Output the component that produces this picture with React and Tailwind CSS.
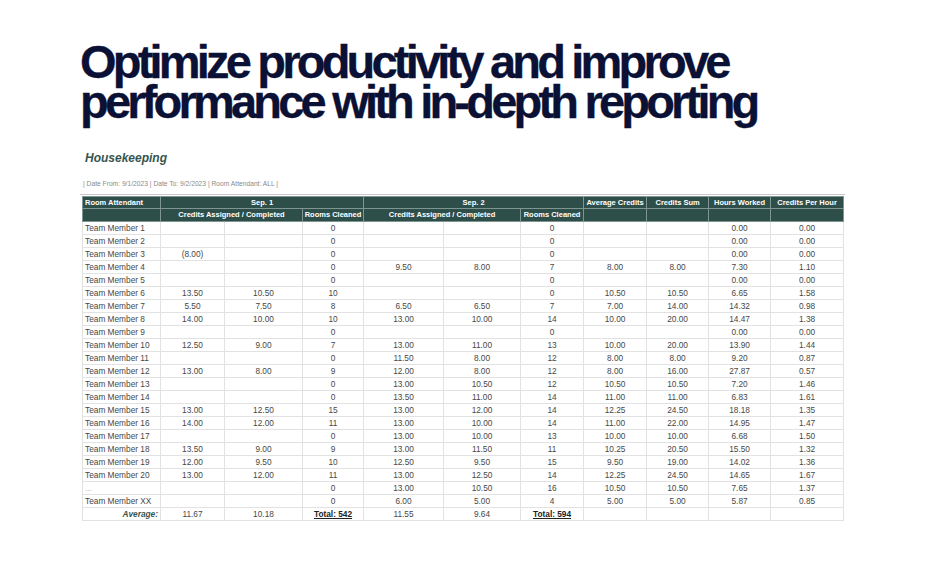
import React from "react";

const rows = [
  ["Team Member 1", "", "", "0", "", "", "0", "", "", "0.00", "0.00"],
  ["Team Member 2", "", "", "0", "", "", "0", "", "", "0.00", "0.00"],
  ["Team Member 3", "(8.00)", "", "0", "", "", "0", "", "", "0.00", "0.00"],
  ["Team Member 4", "", "", "0", "9.50", "8.00", "7", "8.00", "8.00", "7.30", "1.10"],
  ["Team Member 5", "", "", "0", "", "", "0", "", "", "0.00", "0.00"],
  ["Team Member 6", "13.50", "10.50", "10", "", "", "0", "10.50", "10.50", "6.65", "1.58"],
  ["Team Member 7", "5.50", "7.50", "8", "6.50", "6.50", "7", "7.00", "14.00", "14.32", "0.98"],
  ["Team Member 8", "14.00", "10.00", "10", "13.00", "10.00", "14", "10.00", "20.00", "14.47", "1.38"],
  ["Team Member 9", "", "", "0", "", "", "0", "", "", "0.00", "0.00"],
  ["Team Member 10", "12.50", "9.00", "7", "13.00", "11.00", "13", "10.00", "20.00", "13.90", "1.44"],
  ["Team Member 11", "", "", "0", "11.50", "8.00", "12", "8.00", "8.00", "9.20", "0.87"],
  ["Team Member 12", "13.00", "8.00", "9", "12.00", "8.00", "12", "8.00", "16.00", "27.87", "0.57"],
  ["Team Member 13", "", "", "0", "13.00", "10.50", "12", "10.50", "10.50", "7.20", "1.46"],
  ["Team Member 14", "", "", "0", "13.50", "11.00", "14", "11.00", "11.00", "6.83", "1.61"],
  ["Team Member 15", "13.00", "12.50", "15", "13.00", "12.00", "14", "12.25", "24.50", "18.18", "1.35"],
  ["Team Member 16", "14.00", "12.00", "11", "13.00", "10.00", "14", "11.00", "22.00", "14.95", "1.47"],
  ["Team Member 17", "", "", "0", "13.00", "10.00", "13", "10.00", "10.00", "6.68", "1.50"],
  ["Team Member 18", "13.50", "9.00", "9", "13.00", "11.50", "11", "10.25", "20.50", "15.50", "1.32"],
  ["Team Member 19", "12.00", "9.50", "10", "12.50", "9.50", "15", "9.50", "19.00", "14.02", "1.36"],
  ["Team Member 20", "13.00", "12.00", "11", "13.00", "12.50", "14", "12.25", "24.50", "14.65", "1.67"],
  ["...", "", "", "0", "13.00", "10.50", "16", "10.50", "10.50", "7.65", "1.37"],
  ["Team Member XX", "", "", "0", "6.00", "5.00", "4", "5.00", "5.00", "5.87", "0.85"],
];

const widths = [78, 64, 78, 61, 80, 77, 63, 63, 62, 62, 73];

const App = () => {
  return (
    <div className="w-[925px] h-[577px] bg-white overflow-hidden pl-[80px] pt-[42px] font-['Liberation_Sans',Arial,sans-serif]">
      {/* Headline */}
      <h1 className="text-[47px] leading-[40px] font-bold tracking-[-3.8px] text-[#0b1035] [-webkit-text-stroke:0.3px_#0b1035]">
        <div>Optimize productivity and improve</div>
        <div>performance with in-depth reporting</div>
      </h1>

      {/* Report */}
      <div className="ml-[5px] mt-[29px] h-[14px] leading-[14px] text-[12px] font-bold italic text-[#35554f]">
        Housekeeping
      </div>
      <div className="ml-[3px] mt-[15px] h-[8px] leading-[8px] text-[6.7px] text-[#8a8a8a]">
        | Date From: 9/1/2023 | Date To: 9/2/2023 | Room Attendant: ALL |
      </div>
      <div className="mt-[6px] w-[765px] border-t border-[#c8c8c8]" />

      <table className="ml-[2px] mt-[1px] table-fixed border-collapse w-[761px] text-[8.3px] leading-none text-[#474747]">
        <colgroup>
          {widths.map((w, i) => (
            <col key={i} style={{ width: w }} />
          ))}
        </colgroup>
        <thead className="bg-[#2e4e4a] text-white font-bold text-[7.5px]">
          <tr className="h-[12px]">
            <th className="border border-[#7f9592] text-left pl-[2px] font-bold">Room Attendant</th>
            <th colSpan={3} className="border border-[#7f9592] text-center font-bold">Sep. 1</th>
            <th colSpan={3} className="border border-[#7f9592] text-center font-bold">Sep. 2</th>
            <th className="border border-[#7f9592] text-center font-bold">Average Credits</th>
            <th className="border border-[#7f9592] text-center font-bold">Credits Sum</th>
            <th className="border border-[#7f9592] text-center font-bold">Hours Worked</th>
            <th className="border border-[#7f9592] text-center font-bold">Credits Per Hour</th>
          </tr>
          <tr className="h-[13px]">
            <th className="border border-[#7f9592]"></th>
            <th colSpan={2} className="border border-[#7f9592] text-center font-bold">Credits Assigned / Completed</th>
            <th className="border border-[#7f9592] text-center font-bold">Rooms Cleaned</th>
            <th colSpan={2} className="border border-[#7f9592] text-center font-bold">Credits Assigned / Completed</th>
            <th className="border border-[#7f9592] text-center font-bold">Rooms Cleaned</th>
            <th className="border border-[#7f9592]"></th>
            <th className="border border-[#7f9592]"></th>
            <th className="border border-[#7f9592]"></th>
            <th className="border border-[#7f9592]"></th>
          </tr>
        </thead>
        <tbody>
          {rows.map((r, i) => (
            <tr key={i} className="h-[13px]">
              {r.map((c, j) => (
                <td
                  key={j}
                  className={
                    j === 0
                      ? c === "..."
                        ? "border border-[#e2e2e2] pl-[2px] text-left text-[#b5b5b5]"
                        : "border border-[#e2e2e2] pl-[2px] text-left whitespace-nowrap"
                      : "border border-[#e2e2e2] text-center"
                  }
                >
                  {c}
                </td>
              ))}
            </tr>
          ))}
          <tr className="h-[13px]">
            <td className="border border-[#e2e2e2] pr-[2px] text-right font-bold italic text-[#35554f]">Average:</td>
            <td className="border border-[#e2e2e2] text-center">11.67</td>
            <td className="border border-[#e2e2e2] text-center">10.18</td>
            <td className="border border-[#e2e2e2] text-center font-bold underline text-[#222]">Total: 542</td>
            <td className="border border-[#e2e2e2] text-center">11.55</td>
            <td className="border border-[#e2e2e2] text-center">9.64</td>
            <td className="border border-[#e2e2e2] text-center font-bold underline text-[#222]">Total: 594</td>
            <td className="border border-[#e2e2e2]"></td>
            <td className="border border-[#e2e2e2]"></td>
            <td className="border border-[#e2e2e2]"></td>
            <td className="border border-[#e2e2e2]"></td>
          </tr>
        </tbody>
      </table>
    </div>
  );
};

export default App;
